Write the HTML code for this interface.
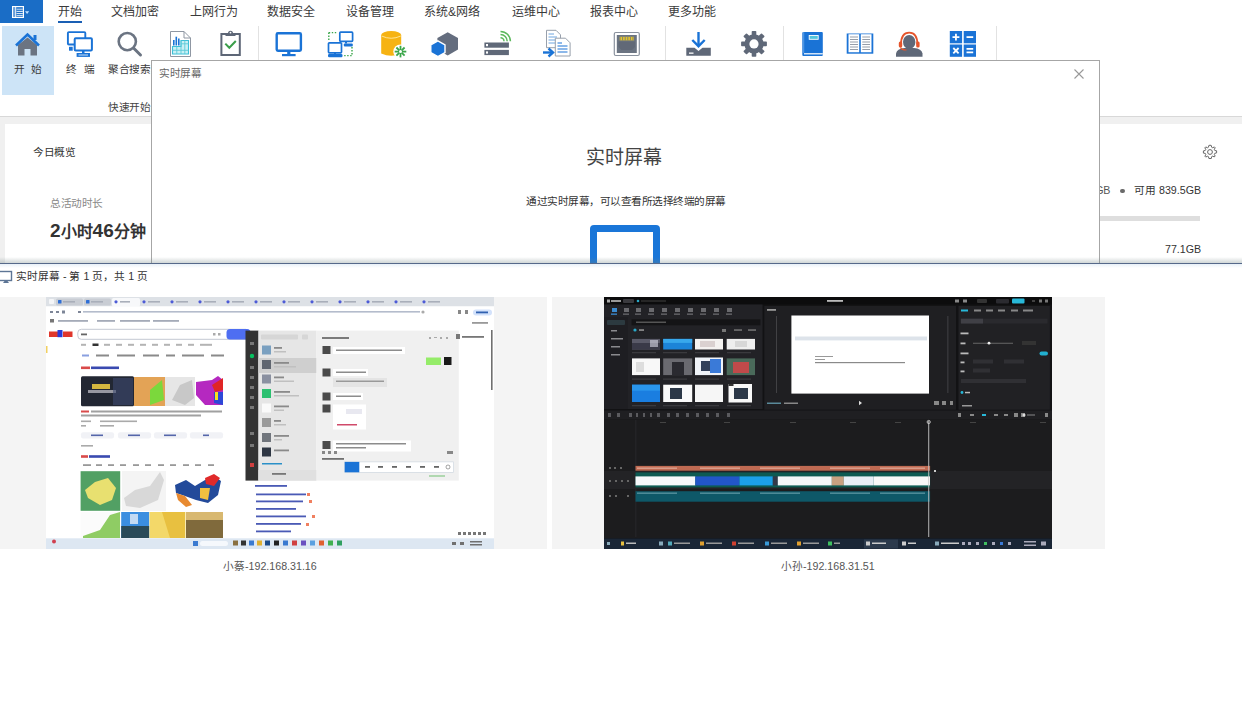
<!DOCTYPE html>
<html lang="zh-CN"><head><meta charset="utf-8">
<style>
html,body{margin:0;padding:0;}
body{width:1242px;height:716px;overflow:hidden;position:relative;background:#fff;font-family:"Liberation Sans",sans-serif;color:#333;}
.a{position:absolute;white-space:nowrap;}
.tab{position:absolute;top:2px;font-size:12px;line-height:20px;color:#3a3a3a;}
.lbl{position:absolute;top:60px;font-size:10.67px;letter-spacing:-0.5px;line-height:18px;color:#3a3a3a;}
</style></head><body>

<!-- menu bar -->
<div class="a" style="left:0;top:0;width:43px;height:23px;background:#1a6dc6;"></div>
<svg class="a" style="left:0;top:0" width="43" height="23">
  <rect x="12.6" y="6.6" width="10.8" height="10.8" fill="none" stroke="#fff" stroke-width="1.2"/>
  <line x1="15.7" y1="6.5" x2="15.7" y2="17.5" stroke="#fff" stroke-width="1"/>
  <rect x="13.3" y="7.3" width="1.6" height="9.4" fill="#c8dcf4" opacity="0.5"/>
  <line x1="16.5" y1="9.2" x2="22.8" y2="9.2" stroke="#e6f0fb" stroke-width="0.9"/>
  <line x1="16.5" y1="11.4" x2="22.8" y2="11.4" stroke="#fff" stroke-width="0.9"/>
  <line x1="16.5" y1="13.6" x2="22.8" y2="13.6" stroke="#fff" stroke-width="0.9"/>
  <line x1="16.5" y1="15.6" x2="22.8" y2="15.6" stroke="#e6f0fb" stroke-width="0.9"/>
  <path d="M25 11.2 L29.2 11.2 L27.1 13.9 Z" fill="#bfe0ff"/>
</svg>
<div class="tab" style="left:58px">开始</div>
<div class="a" style="left:58px;top:21px;width:24px;height:2px;background:#1a5fb4"></div>
<div class="tab" style="left:111px">文档加密</div>
<div class="tab" style="left:190px">上网行为</div>
<div class="tab" style="left:267px">数据安全</div>
<div class="tab" style="left:346px">设备管理</div>
<div class="tab" style="left:424px">系统&amp;网络</div>
<div class="tab" style="left:512px">运维中心</div>
<div class="tab" style="left:590px">报表中心</div>
<div class="tab" style="left:668px">更多功能</div>

<!-- ribbon -->
<div class="a" style="left:2px;top:26px;width:52px;height:69px;background:#cde4f7"></div>
<svg class="a" style="left:0;top:0" width="1242" height="120">
  <!-- home -->
  <path d="M18 45 L27.5 37.5 L37 45 V55.5 H30.5 V49 H24.5 V55.5 H18 Z" fill="#6b7482"/>
  <polyline points="16,45.5 27.5,34.5 39,45.5" fill="none" stroke="#1a73d6" stroke-width="2.6"/>
  <rect x="33.5" y="35" width="3" height="5" fill="#1a73d6"/>
  <!-- terminals -->
  <rect x="67.9" y="32.1" width="17.4" height="12.4" fill="none" stroke="#1a73d6" stroke-width="1.9" rx="1"/>
  <rect x="69" y="46.8" width="3.7" height="3.9" fill="#1a73d6"/>
  <rect x="74.7" y="38.3" width="17.2" height="12.1" fill="#fff" stroke="#1a73d6" stroke-width="2" rx="1"/>
  <rect x="82" y="50.5" width="2.5" height="2.5" fill="#1a73d6"/>
  <rect x="76.6" y="53" width="13.4" height="3.9" fill="#1a73d6"/>
  <line x1="78.5" y1="55" x2="88" y2="55" stroke="#fff" stroke-width="0.8"/>
  <!-- search -->
  <circle cx="127.3" cy="41.6" r="8.6" fill="none" stroke="#6b7482" stroke-width="2.6"/>
  <line x1="133.5" y1="48" x2="140.5" y2="55" stroke="#6b7482" stroke-width="3" stroke-linecap="round"/>
  <!-- report -->
  <path d="M170.5 31.5 H184 L190.5 38 V56.5 H170.5 Z" fill="#fff" stroke="#8f97a3" stroke-width="1"/>
  <path d="M184 31.5 V38 H190.5" fill="none" stroke="#8f97a3" stroke-width="1"/>
  <rect x="173" y="40" width="1.6" height="5.5" fill="#1a73d6"/>
  <rect x="175.5" y="36.7" width="1.6" height="8.8" fill="#1a73d6"/>
  <rect x="178" y="38.5" width="1.6" height="7" fill="#1a73d6"/>
  <path d="M181 40.5 H188.5 V54 H172.5 V46.5 H181 Z" fill="#c9f0f5" stroke="#3cbfd8" stroke-width="1.1"/>
  <path d="M172.5 50.3 H188.5 M181 43.8 H188.5 M176.8 46.5 V54 M181 40.5 V54 M184.8 40.5 V54" stroke="#5ccad8" stroke-width="0.9" fill="none"/>
  <!-- clipboard -->
  <rect x="221.4" y="34" width="18.4" height="21" fill="#fff" stroke="#5d6676" stroke-width="2"/>
  <path d="M225.5 36 H235.5 V33.2 H233 A2.5 2.5 0 0 0 228 33.2 H225.5 Z" fill="#5d6676"/>
  <circle cx="230.5" cy="32.6" r="0.9" fill="#fff"/>
  <polyline points="225.3,43.6 229.3,47.8 235.8,41" fill="none" stroke="#3a9e4a" stroke-width="2"/>
  <!-- separators -->
  <line x1="258.5" y1="26" x2="258.5" y2="112" stroke="#e2e2e2" stroke-width="1"/>
  <line x1="665.5" y1="26" x2="665.5" y2="112" stroke="#e2e2e2" stroke-width="1"/>
  <line x1="783.5" y1="26" x2="783.5" y2="112" stroke="#e2e2e2" stroke-width="1"/>
  <line x1="996.5" y1="26" x2="996.5" y2="112" stroke="#e2e2e2" stroke-width="1"/>
  <!-- monitor -->
  <rect x="276.7" y="33.2" width="24.2" height="17.6" rx="1.2" fill="#fff" stroke="#1a73d6" stroke-width="2.4"/>
  <rect x="287.2" y="51" width="3.2" height="3" fill="#1a73d6"/>
  <rect x="282" y="54" width="13.6" height="2.2" fill="#1a73d6"/>
  <!-- network -->
  <path d="M328.8 32.6 H337.5 M328.8 32.6 V41" stroke="#3aa64a" stroke-width="1.4" stroke-dasharray="1.4 1.6" fill="none"/>
  <path d="M352 47 V55.6 H343.5" stroke="#3aa64a" stroke-width="1.4" stroke-dasharray="1.4 1.6" fill="none"/>
  <rect x="339.8" y="32.1" width="12.8" height="9.2" rx="0.8" fill="#fff" stroke="#1a73d6" stroke-width="1.7"/>
  <rect x="345" y="41" width="2" height="2.5" fill="#1a73d6"/>
  <rect x="343.8" y="43.6" width="9" height="2.8" rx="1" fill="#1a73d6"/>
  <rect x="328.5" y="42.8" width="13" height="10" rx="0.8" fill="#fff" stroke="#1a73d6" stroke-width="1.7"/>
  <rect x="334" y="52.5" width="2" height="1.5" fill="#1a73d6"/>
  <rect x="328" y="54" width="14.5" height="3.2" rx="1.2" fill="#1a73d6"/>
  <!-- database -->
  <path d="M381.2 35 V53.5 Q391.2 58 401.2 53.5 V35 Z" fill="#f6b313"/>
  <ellipse cx="391.2" cy="35" rx="10" ry="4" fill="#f6b313"/>
  <path d="M381.6 36 Q391.2 40.5 400.8 36" fill="none" stroke="#ffe9a0" stroke-width="0.9"/>
  <circle cx="400.5" cy="51.6" r="7.2" fill="#fff"/>
  <g stroke="#3aa64a" stroke-width="1.8">
    <line x1="400.5" y1="45.8" x2="400.5" y2="57.4"/>
    <line x1="394.7" y1="51.6" x2="406.3" y2="51.6"/>
    <line x1="396.4" y1="47.5" x2="404.6" y2="55.7"/>
    <line x1="404.6" y1="47.5" x2="396.4" y2="55.7"/>
  </g>
  <circle cx="400.5" cy="51.6" r="1.5" fill="#fff"/>
  <!-- hexagons -->
  <polygon points="447.7,32.2 458,38 458,49.6 447.7,55.4 437.4,49.6 437.4,38" fill="#646d7e"/>
  <polygon points="437.9,40.8 445,44.8 445,52.5 437.9,56.5 430.8,52.5 430.8,44.8" fill="#1a73d6" stroke="#fff" stroke-width="1.4"/>
  <!-- server -->
  <rect x="484.4" y="42.5" width="24.5" height="5.2" fill="#5f6878"/>
  <rect x="484.4" y="49.9" width="24.5" height="5.2" fill="#5f6878"/>
  <rect x="486" y="44" width="2" height="2.2" fill="#fff"/>
  <rect x="486" y="51.4" width="2" height="2.2" fill="#fff"/>
  <g fill="none" stroke="#5cb85c" stroke-width="1.5">
    <path d="M500.5 37.8 A3.5 3.5 0 0 1 504 41.3"/>
    <path d="M500.5 34.6 A6.7 6.7 0 0 1 507.2 41.3"/>
    <path d="M500.5 31.4 A9.9 9.9 0 0 1 510.4 41.3"/>
  </g>
  <!-- doc transfer -->
  <path d="M546.5 30.3 H556 L560.5 34.8 V47.7 H546.5 Z" fill="#fff" stroke="#98a0ac" stroke-width="1"/>
  <path d="M548.5 34 H554 M548.5 37 H557 M548.5 40 H557 M548.5 43 H557" stroke="#6fa6e0" stroke-width="1"/>
  <path d="M555.3 38.2 H565.5 L570.1 42.8 V56 H555.3 Z" fill="#fff" stroke="#98a0ac" stroke-width="1"/>
  <path d="M557.5 43 H562 M557.5 46 H567.5 M557.5 49 H567.5 M557.5 52 H567.5" stroke="#1a73d6" stroke-width="1.2"/>
  <path d="M543 52.5 H552" stroke="#1a73d6" stroke-width="2.4"/>
  <polyline points="548.5,48.5 553,52.5 548.5,56.5" fill="none" stroke="#1a73d6" stroke-width="2.4"/>
  <!-- ethernet -->
  <rect x="614.3" y="32.5" width="25" height="23" rx="1.5" fill="#fff" stroke="#8a929e" stroke-width="1.2"/>
  <rect x="616.8" y="35" width="20" height="18" fill="#6b7482"/>
  <rect x="619.5" y="36.8" width="14.5" height="3.6" fill="#e6c62a"/>
  <path d="M620 37 V40.4 M622.6 37 V40.4 M625.2 37 V40.4 M627.8 37 V40.4 M630.4 37 V40.4 M633 37 V40.4" stroke="#6b7482" stroke-width="0.8"/>
  <path d="M618.5 41.5 H635 V47 L632 50 H621.5 L618.5 47 Z" fill="#5a6270" opacity="0.6"/>
  <!-- download -->
  <line x1="698.5" y1="32" x2="698.5" y2="45" stroke="#1a73d6" stroke-width="2.4"/>
  <polyline points="692.3,40 698.5,46.2 704.7,40" fill="none" stroke="#1a73d6" stroke-width="2.4"/>
  <path d="M686.3 47.7 H694.5 L698.5 51 L702.5 47.7 H710.8 V55.7 H686.3 Z" fill="#5f6878"/>
  <rect x="689" y="52.5" width="4.5" height="1.3" fill="#fff"/>
  <!-- gear -->
  <g transform="translate(754,43.9)" fill="#5f6878">
    <g>
      <rect x="-2.3" y="-12.9" width="4.6" height="5" rx="0.8"/>
      <rect x="-2.3" y="7.9" width="4.6" height="5" rx="0.8"/>
      <rect x="-12.9" y="-2.3" width="5" height="4.6" rx="0.8"/>
      <rect x="7.9" y="-2.3" width="5" height="4.6" rx="0.8"/>
    </g>
    <g transform="rotate(45)">
      <rect x="-2.3" y="-12.9" width="4.6" height="5" rx="0.8"/>
      <rect x="-2.3" y="7.9" width="4.6" height="5" rx="0.8"/>
      <rect x="-12.9" y="-2.3" width="5" height="4.6" rx="0.8"/>
      <rect x="7.9" y="-2.3" width="5" height="4.6" rx="0.8"/>
    </g>
    <circle r="9.6"/>
    <circle r="4.6" fill="#fff"/>
  </g>
  <!-- book -->
  <rect x="802.3" y="32" width="20.5" height="24" rx="1" fill="#1a73d6"/>
  <rect x="804" y="53.2" width="18.8" height="1.2" fill="#fff"/>
  <rect x="803.2" y="32" width="1" height="21" fill="#5aa0e8"/>
  <rect x="809.2" y="35.5" width="9" height="3.8" fill="#52c6dc" stroke="#fff" stroke-width="0.9"/>
  <!-- open book -->
  <path d="M846.7 33.5 H873.3 V53.7 H846.7 Z" fill="#1a73d6"/>
  <path d="M848.5 34.2 H859.2 V52.2 H848.5 Z M860.8 34.2 H871.5 V52.2 H860.8 Z" fill="#fff"/>
  <path d="M850 37 H858 M850 39.5 H858 M850 42 H858 M850 44.5 H858 M850 47 H858 M850 49.5 H858 M862.3 37 H870 M862.3 39.5 H870 M862.3 42 H870 M862.3 44.5 H870 M862.3 47 H870 M862.3 49.5 H870" stroke="#8a929e" stroke-width="0.9"/>
  <!-- headset -->
  <ellipse cx="909.2" cy="42" rx="6.2" ry="7" fill="#5f6878"/>
  <path d="M896 56.8 V53.5 Q897 48.5 904.5 48 H914 Q921.5 48.5 922.5 53.5 V56.8 Z" fill="#5f6878"/>
  <path d="M901 44.5 Q901 32.6 909.2 32.6 Q917.4 32.6 917.4 44.5" fill="none" stroke="#e5542b" stroke-width="1.8"/>
  <rect x="898.8" y="41.5" width="3.4" height="6" rx="1.5" fill="#e5542b"/>
  <rect x="916.2" y="41.5" width="3.4" height="6" rx="1.5" fill="#e5542b"/>
  <path d="M900.5 47.5 Q901.5 50 906.5 50" fill="none" stroke="#e5542b" stroke-width="1.2"/>
  <!-- calculator -->
  <rect x="949.8" y="31" width="12.3" height="12.3" fill="#1a73d6"/>
  <rect x="963.7" y="31" width="12.3" height="12.3" fill="#1a73d6"/>
  <rect x="949.8" y="44.5" width="12.3" height="12.3" fill="#1a73d6"/>
  <rect x="963.7" y="44.5" width="12.3" height="12.3" fill="#1a73d6"/>
  <g stroke="#fff" stroke-width="1.8">
    <path d="M952.5 37.1 H959.4 M955.95 33.7 V40.6"/>
    <path d="M966.5 37.1 H973.2"/>
    <path d="M953.3 48 L958.6 53.3 M958.6 48 L953.3 53.3"/>
    <path d="M966.5 48.8 H973.2 M966.5 52.4 H973.2"/>
  </g>
  <!-- ribbon bottom border -->
  <line x1="0" y1="116.5" x2="1242" y2="116.5" stroke="#d8d8d8" stroke-width="1"/>
</svg>
<div class="lbl" style="left:13.5px;letter-spacing:6.5px">开始</div>
<div class="lbl" style="left:66px;letter-spacing:6.5px">终端</div>
<div class="lbl" style="left:108px">聚合搜索</div>
<div class="a" style="left:108px;top:98px;font-size:10.67px;letter-spacing:-0.5px;line-height:18px;color:#444">快速开始</div>

<!-- main content area -->
<div class="a" style="left:0;top:117px;width:1242px;height:147px;background:#f0f0f0"></div>
<div class="a" style="left:5px;top:124px;width:1237px;height:140px;background:#fff"></div>
<div class="a" style="left:33px;top:143px;font-size:10.67px;letter-spacing:-0.5px;line-height:18px;color:#333">今日概览</div>
<div class="a" style="left:50px;top:194px;font-size:10.67px;letter-spacing:-0.5px;line-height:18px;color:#888">总活动时长</div>
<div class="a" style="left:50px;top:219px;font-size:16px;line-height:24px;color:#333;font-weight:bold"><span style="font-size:19px">2</span>小时<span style="font-size:19px">46</span>分钟</div>
<svg class="a" style="left:1202px;top:144px" width="16" height="16" viewBox="0 0 16 16">
  <path d="M8 1.2 L9.3 1.5 L9.6 3.2 L10.8 3.8 L12.3 2.9 L13.2 3.8 L12.3 5.3 L12.8 6.5 L14.6 6.8 L14.6 8.9 L12.8 9.3 L12.3 10.5 L13.2 12 L12.2 13 L10.8 12.1 L9.6 12.7 L9.3 14.5 L6.9 14.5 L6.5 12.7 L5.3 12.2 L3.8 13.1 L2.9 12.2 L3.8 10.7 L3.3 9.4 L1.4 9.1 L1.4 6.9 L3.2 6.5 L3.8 5.3 L2.8 3.9 L3.8 2.9 L5.3 3.8 L6.5 3.2 L6.8 1.5 Z" fill="none" stroke="#666" stroke-width="1"/>
  <circle cx="8" cy="8" r="2.4" fill="none" stroke="#666" stroke-width="1"/>
</svg>
<div class="a" style="right:132px;top:181px;font-size:10.67px;letter-spacing:-0.3px;line-height:18px;color:#555">5GB</div>
<div class="a" style="left:1120px;top:188.6px;width:4.8px;height:4.8px;border-radius:50%;background:#6a6a6a"></div>
<div class="a" style="left:1134px;top:181px;font-size:10.67px;line-height:18px;color:#333">可用 839.5GB</div>
<div class="a" style="left:1100px;top:216px;width:100px;height:5px;background:#dedede"></div>
<div class="a" style="left:1165px;top:240px;font-size:10.67px;line-height:18px;color:#333">77.1GB</div>

<!-- dialog -->
<div class="a" style="left:151px;top:60px;width:947px;height:210px;background:#fff;border:1px solid #a6a6a6;"></div>
<div class="a" style="left:159px;top:64px;font-size:10.67px;letter-spacing:-0.5px;line-height:18px;color:#666">实时屏幕</div>
<svg class="a" style="left:1073px;top:68px" width="12" height="12">
  <path d="M1.5 1.5 L10.5 10.5 M10.5 1.5 L1.5 10.5" stroke="#999" stroke-width="1.1"/>
</svg>
<div class="a" style="left:586px;top:144px;font-size:19px;line-height:28px;color:#444">实时屏幕</div>
<div class="a" style="left:526px;top:192px;font-size:10.67px;letter-spacing:-0.5px;line-height:18px;color:#333">通过实时屏幕，可以查看所选择终端的屏幕</div>
<div class="a" style="left:590px;top:225px;width:56px;height:60px;border:7px solid #1a76d8;border-radius:4px;background:#fff"></div>

<!-- bottom window -->
<div class="a" style="left:0;top:257px;width:1242px;height:6px;background:linear-gradient(rgba(110,130,130,0),rgba(110,130,130,0.32))"></div>
<div class="a" style="left:0;top:263px;width:1242px;height:453px;background:linear-gradient(#e9f1f8,#fff 4px);border-top:1.5px solid #56698a"></div>
<svg class="a" style="left:0;top:270px" width="14" height="14">
  <rect x="-1" y="1.5" width="12.5" height="9" fill="none" stroke="#5d7595" stroke-width="1.4"/>
  <path d="M3 13 H9 L7.5 11 H4.5 Z" fill="#5d7595"/>
</svg>
<div class="a" style="left:16px;top:267px;font-size:10.67px;line-height:18px;color:#333">实时屏幕 - 第 1 页，共 1 页</div>

<!-- cards -->
<div class="a" style="left:0;top:297px;width:547px;height:252px;background:#f4f4f4"></div>
<div class="a" style="left:552px;top:297px;width:553px;height:252px;background:#f4f4f4"></div>

<!-- screenshot 1 -->
<svg class="a" style="left:46px;top:297px;filter:blur(0.4px)" width="448" height="252" viewBox="46 297 448 252">
<rect x="46" y="297" width="448" height="252" fill="#fff"/>
<rect x="46" y="297" width="448" height="9.5" fill="#dde1e6"/>
<rect x="49" y="299" width="5" height="5" rx="1" fill="#f5f6f8"/>
<g fill="#c9cdd4">
<rect x="56" y="298.5" width="27" height="7" rx="1.5"/>
<rect x="84" y="298.5" width="27" height="7" rx="1.5"/>
</g>
<rect x="112" y="298" width="28" height="8.5" rx="1.5" fill="#f7f8fa"/>
<g fill="#2f6fd6">
<rect x="58" y="300" width="3.5" height="3.5" rx="0.6"/>
<rect x="86" y="300" width="3.5" height="3.5" rx="0.6"/>
</g>
<g fill="#4d5bd6">
<circle cx="116" cy="301.8" r="1.6"/><circle cx="144" cy="301.8" r="1.6"/><circle cx="172" cy="301.8" r="1.6"/><circle cx="200" cy="301.8" r="1.6"/><circle cx="228" cy="301.8" r="1.6"/><circle cx="256" cy="301.8" r="1.6"/><circle cx="284" cy="301.8" r="1.6"/><circle cx="312" cy="301.8" r="1.6"/><circle cx="340" cy="301.8" r="1.6"/><circle cx="368" cy="301.8" r="1.6"/><circle cx="396" cy="301.8" r="1.6"/><circle cx="424" cy="301.8" r="1.6"/>
</g>
<g fill="#a9afba">
<rect x="63" y="301" width="12" height="1.6"/><rect x="91" y="301" width="12" height="1.6"/><rect x="120" y="301" width="10" height="1.6"/><rect x="148" y="301" width="12" height="1.6"/><rect x="176" y="301" width="12" height="1.6"/><rect x="204" y="301" width="12" height="1.6"/><rect x="232" y="301" width="12" height="1.6"/><rect x="260" y="301" width="12" height="1.6"/><rect x="288" y="301" width="12" height="1.6"/><rect x="316" y="301" width="12" height="1.6"/><rect x="344" y="301" width="12" height="1.6"/><rect x="372" y="301" width="12" height="1.6"/><rect x="400" y="301" width="12" height="1.6"/><rect x="428" y="301" width="12" height="1.6"/>
</g>
<rect x="46" y="306.5" width="448" height="21" fill="#fff"/>
<g fill="#7d8597">
<rect x="50" y="311" width="3" height="2"/><rect x="56" y="311" width="3" height="2"/><rect x="62" y="310.5" width="3" height="3"/>
<rect x="78" y="311" width="3" height="2"/>
</g>
<rect x="83" y="311" width="337" height="1.6" fill="#b4bccc"/><circle cx="423" cy="312" r="1.6" fill="#aaa"/>
<rect x="458" y="310" width="3" height="4" fill="#888"/><rect x="465" y="310" width="3" height="4" fill="#888"/>
<rect x="473" y="309.5" width="19" height="6" rx="3" fill="#d3e2fb"/>
<rect x="476" y="311.5" width="12" height="1.8" fill="#3060b0"/>
<rect x="50" y="319" width="4" height="3.5" fill="#777"/>
<g fill="#a5abb8">
<rect x="58" y="320" width="30" height="1.8"/><rect x="97" y="320" width="18" height="1.8"/><rect x="120" y="320" width="30" height="1.8"/><rect x="153" y="320" width="26" height="1.8"/>
</g>
<rect x="472" y="322" width="16" height="1.8" fill="#999"/>
<!-- baidu logo -->
<rect x="49" y="331.5" width="9" height="5.5" fill="#e0362c"/>
<rect x="57.5" y="330" width="5" height="7.2" fill="#2a3ad8"/>
<rect x="63" y="331.5" width="9.5" height="5.5" fill="#e0362c"/>
<rect x="46" y="346" width="1.5" height="7" fill="#f2d060"/>
<!-- search -->
<rect x="77.8" y="329.3" width="171.5" height="10" rx="3.5" fill="#fff" stroke="#c4c8d2" stroke-width="1"/>
<rect x="81" y="333.5" width="6" height="1.8" fill="#666"/>
<rect x="218" y="333" width="2.5" height="2.5" fill="#aaa"/><rect x="213" y="333" width="2.5" height="2.5" fill="#aaa"/>
<rect x="226.5" y="329" width="24" height="10.5" rx="3.5" fill="#4e6ef2"/>
<!-- nav row -->
<g fill="#b4b4b4">
<rect x="81" y="343.8" width="5" height="2"/><rect x="92.5" y="343.5" width="6" height="2.5" fill="#333"/><rect x="104" y="343.8" width="6" height="2"/><rect x="116" y="343.8" width="6" height="2"/><rect x="128" y="343.8" width="6" height="2"/><rect x="140" y="343.8" width="6" height="2"/><rect x="152" y="343.8" width="6" height="2"/><rect x="164" y="343.8" width="6" height="2"/><rect x="176" y="343.8" width="6" height="2"/><rect x="188" y="343.8" width="6" height="2"/><rect x="200" y="343.8" width="12" height="2"/>
</g>
<g fill="#8a8a8a">
<rect x="82" y="354.5" width="7" height="2" fill="#8aa0e0"/><rect x="96" y="354.5" width="13" height="2"/><rect x="117" y="354.5" width="18" height="2"/><rect x="143" y="354.5" width="16" height="2"/><rect x="166" y="354.5" width="9" height="2"/><rect x="182" y="354.5" width="22" height="2"/><rect x="211" y="354.5" width="13" height="2"/>
</g>
<rect x="81" y="366.5" width="9" height="2.6" fill="#d94a4a"/><rect x="91" y="366.5" width="28" height="2.6" fill="#3a4ab0"/>
<!-- image strip -->
<rect x="81" y="376.2" width="53" height="30" rx="1.5" fill="#222733"/>
<rect x="92" y="384" width="18" height="5" fill="#e8c840" opacity="0.9"/>
<rect x="88" y="390" width="28" height="3" fill="#c9c9d0" opacity="0.7"/>
<rect x="113" y="378" width="20" height="27" fill="#3d4a70" opacity="0.6"/>
<rect x="134" y="377" width="31" height="29" fill="#e3a356"/>
<path d="M150 390 L162 380 L164 400 L150 405 Z" fill="#7bd83c"/>
<rect x="165" y="377" width="30" height="29" fill="#e6e6e6"/>
<path d="M172 400 L180 385 L192 380 L194 398 L185 405 Z" fill="#c8c8c8"/>
<path d="M196 382 L212 380 L218 376 L223 380 L223 405 L205 405 L196 395 Z" fill="#b528c0"/>
<path d="M212 385 L223 378 L223 390 L215 392 Z" fill="#e02525"/>
<path d="M214 392 L223 392 L223 405 L214 403 Z" fill="#2d48d8"/>
<rect x="215" y="392" width="3" height="8" fill="#f4e020"/>
<!-- text lines -->
<g fill="#a0a0a0">
<rect x="81" y="410.5" width="8" height="2" fill="#d94a4a"/><rect x="91" y="410.5" width="131" height="2"/>
<rect x="81" y="414.5" width="120" height="2"/>
<rect x="81" y="420.5" width="10" height="1.6" fill="#aaa"/><rect x="100" y="420.5" width="37" height="1.6" fill="#aaa"/>
<rect x="81" y="425" width="5" height="1.6" fill="#aaa"/><rect x="100" y="425" width="14" height="1.6" fill="#aaa"/>
</g>
<g fill="#f1f2f6">
<rect x="81" y="432.2" width="33" height="6.2" rx="2"/><rect x="118" y="432.2" width="33" height="6.2" rx="2"/><rect x="154" y="432.2" width="33" height="6.2" rx="2"/><rect x="190" y="432.2" width="33" height="6.2" rx="2"/>
</g>
<g fill="#5566aa">
<rect x="91" y="434.5" width="12" height="1.6"/><rect x="128" y="434.5" width="12" height="1.6"/><rect x="164" y="434.5" width="12" height="1.6"/><rect x="203" y="434.5" width="6" height="1.6"/>
</g>
<rect x="81" y="445" width="12" height="1.6" fill="#aaa"/>
<rect x="81" y="455.2" width="7" height="2.6" fill="#d94a4a"/><rect x="89" y="455.2" width="21" height="2.6" fill="#3a4ab0"/>
<g fill="#999">
<rect x="83" y="464.2" width="8" height="1.8"/><rect x="96" y="464.2" width="6" height="1.8"/><rect x="108" y="464.2" width="6" height="1.8"/><rect x="120" y="464.2" width="6" height="1.8"/><rect x="133" y="464.2" width="6" height="1.8"/><rect x="145" y="464.2" width="6" height="1.8"/><rect x="158" y="464.2" width="6" height="1.8"/><rect x="170" y="464.2" width="6" height="1.8"/><rect x="183" y="464.2" width="6" height="1.8"/><rect x="195" y="464.2" width="6" height="1.8"/><rect x="208" y="464.2" width="6" height="1.8"/>
</g>
<!-- images -->
<rect x="80.6" y="471.2" width="39.6" height="39.6" fill="#52a064"/>
<path d="M85 490 L95 482 L108 478 L116 488 L112 500 L100 505 L88 498 Z" fill="#e8e070"/>
<rect x="122" y="471" width="44" height="40" fill="#f4f4f4"/>
<path d="M124 498 L135 490 L150 486 L160 472 L164 480 L158 500 L140 508 L126 506 Z" fill="#d8d8d8"/>
<path d="M175 485 L186 480 L195 486 L205 480 L214 476 L221 481 L218 495 L208 503 L196 500 L185 496 L176 493 Z" fill="#234a9a"/>
<path d="M176 493 L185 496 L192 505 L186 507 L178 500 Z" fill="#e88a30"/>
<path d="M205 478 L214 474 L220 478 L214 486 L206 484 Z" fill="#e02a2a"/>
<path d="M200 488 L210 488 L208 500 L200 498 Z" fill="#f0c040"/>
<rect x="80.6" y="512" width="39.6" height="26" fill="#fbfbfb"/>
<path d="M83 536 L100 530 L110 515 L120 512 L120 538 L83 538 Z" fill="#8fcc64"/>
<rect x="121.2" y="512" width="28" height="26" fill="#3b8ee0"/>
<rect x="121.2" y="526" width="28" height="12" fill="#2a4a58"/>
<rect x="130" y="514" width="8" height="10" fill="#e6eef8" opacity=".8"/>
<rect x="149.5" y="512" width="36" height="26" fill="#f3d869"/>
<path d="M162 512 L185 512 L185 538 L170 538 Z" fill="#e8c040"/>
<rect x="186" y="512" width="37" height="26" fill="#806a3c"/>
<rect x="186" y="512" width="37" height="8" fill="#d8b870"/>
<!-- link list below wechat -->
<g fill="#4a5ab5">
<rect x="255" y="485" width="32" height="1.8"/>
<rect x="256" y="493.5" width="50" height="1.8"/>
<rect x="256" y="500.5" width="47" height="1.8"/>
<rect x="256" y="508" width="40" height="1.8"/>
<rect x="256" y="515.5" width="50" height="1.8"/>
<rect x="256" y="523" width="45" height="1.8"/>
<rect x="256" y="530.5" width="35" height="1.8"/>
</g>
<g fill="#f08060"><rect x="307" y="493" width="3" height="3"/><rect x="309" y="500" width="3" height="3"/><rect x="312" y="515" width="3" height="3"/><rect x="306" y="523" width="3" height="3"/></g>
<rect x="491" y="330" width="1.6" height="60" fill="#707070"/>


<g fill="#777"><rect x="458" y="532" width="3" height="3"/><rect x="463" y="532" width="3" height="3"/><rect x="468" y="532" width="3" height="3"/><rect x="473" y="532" width="3" height="3"/><rect x="478" y="532" width="3" height="3"/><rect x="483" y="532" width="3" height="3"/></g>
<!-- wechat -->
<rect x="245.5" y="330.6" width="13" height="150" fill="#333"/>
<circle cx="252" cy="356" r="2.2" fill="#07c160"/>
<g fill="#777"><rect x="250" y="342" width="4" height="3"/><rect x="250" y="366" width="4" height="3"/><rect x="250" y="376" width="4" height="3"/><rect x="250" y="386" width="4" height="3"/><rect x="250" y="396" width="4" height="3"/><rect x="250" y="406" width="4" height="3"/><rect x="250" y="432" width="4" height="3"/><rect x="250" y="444" width="4" height="3"/></g>
<rect x="250" y="463" width="4" height="4" fill="#d04040"/>
<rect x="258.5" y="330.6" width="58" height="150" fill="#e6e6e6"/>
<rect x="261" y="334.5" width="37" height="5" rx="1" fill="#d6d6d6"/>
<rect x="302" y="334.5" width="6" height="5" rx="1" fill="#d6d6d6"/>
<rect x="258.5" y="358" width="58" height="15" fill="#cfcfcf"/>
<g>
<rect x="262" y="345.5" width="9" height="9" fill="#7aa0c0"/>
<rect x="262" y="360" width="9" height="9" fill="#606670"/>
<rect x="262" y="374.5" width="9" height="9" fill="#8a90a0"/>
<rect x="262" y="389" width="9" height="9" fill="#2cc070"/>
<rect x="262" y="403.5" width="9" height="9" fill="#fafafa"/>
<rect x="262" y="418" width="9" height="9" fill="#9a9a9a"/>
<rect x="262" y="433" width="9" height="9" fill="#70757c"/>
<rect x="262" y="447.5" width="9" height="9" fill="#2e3643"/>
</g>
<g fill="#8a8a8a"><rect x="274" y="347" width="8" height="1.8"/><rect x="274" y="362" width="15" height="1.8"/><rect x="274" y="376.5" width="10" height="1.8"/><rect x="274" y="391" width="16" height="1.8"/><rect x="274" y="405.5" width="15" height="1.8"/><rect x="274" y="420" width="7" height="1.8"/><rect x="274" y="435" width="15" height="1.8"/><rect x="274" y="449.5" width="15" height="1.8"/></g>
<g fill="#c0c0c0"><rect x="274" y="351" width="12" height="1.5"/><rect x="274" y="366" width="22" height="1.5"/><rect x="274" y="380.5" width="20" height="1.5"/><rect x="274" y="395" width="25" height="1.5"/><rect x="274" y="409.5" width="10" height="1.5"/><rect x="274" y="424" width="12" height="1.5"/><rect x="274" y="439" width="8" height="1.5"/></g>
<rect x="262" y="463" width="20" height="1.5" fill="#2a90c8"/>
<rect x="258.5" y="470" width="58" height="10.6" fill="#e0e0e0"/>
<rect x="272" y="473" width="14" height="1.8" fill="#777"/>
<rect x="316.5" y="330.6" width="142.3" height="150" fill="#f0f0f0"/>
<rect x="322" y="337" width="27" height="2" fill="#7a7a7a"/>
<g fill="#aaa"><rect x="429" y="337" width="2" height="2"/><rect x="434" y="337" width="3" height="1"/><rect x="440" y="337" width="2" height="2"/><rect x="446" y="337" width="2" height="2"/></g>
<rect x="456" y="334" width="4" height="5" fill="#444" opacity=".7"/>
<rect x="462" y="336" width="22" height="1.8" fill="#777"/>
<g fill="#4a4a4a"><rect x="322.5" y="346" width="8" height="8"/><rect x="322.5" y="368.5" width="8" height="8"/><rect x="322.5" y="392.5" width="8" height="8"/><rect x="322.5" y="404.5" width="8" height="8"/><rect x="322.5" y="441" width="8" height="8"/></g>
<g fill="#fff"><rect x="333" y="347" width="72" height="7"/><rect x="333" y="369" width="35" height="7"/><rect x="333" y="393" width="30" height="7"/><rect x="333" y="404.5" width="33" height="25"/><rect x="333" y="440.5" width="78" height="11"/></g>
<g fill="#8c8c8c"><rect x="336" y="349.5" width="66" height="1.5"/><rect x="336" y="371.5" width="30" height="1.5"/><rect x="336" y="395.5" width="25" height="1.5"/><rect x="336" y="443" width="70" height="1.5"/><rect x="336" y="447" width="30" height="1.5"/></g>
<rect x="333" y="378" width="54" height="9" fill="#e4e4e4"/><rect x="336" y="380.5" width="48" height="1.5" fill="#999"/>
<rect x="346" y="409" width="16" height="5" fill="#e8e8f0"/><rect x="337" y="424" width="20" height="1.5" fill="#d04a6a"/>
<rect x="426" y="357.5" width="15" height="7.5" fill="#95ec69"/>
<rect x="444" y="357" width="7.5" height="8" fill="#1a1a1a"/>
<g fill="#888"><rect x="322" y="451" width="3" height="3"/><rect x="328" y="451" width="3" height="3"/><rect x="334" y="451" width="3" height="3"/><rect x="447" y="451" width="6" height="3"/></g>
<rect x="322" y="458" width="22" height="1.8" fill="#707070"/>
<rect x="344.7" y="461.9" width="108.8" height="10.4" fill="#fff" stroke="#c8d2dc" stroke-width="0.6"/>
<rect x="344.7" y="461.9" width="14.6" height="10.4" fill="#1a73d6"/>
<g fill="#666"><rect x="365" y="466" width="5" height="1.8"/><rect x="378" y="466" width="5" height="1.8"/><rect x="392" y="466" width="5" height="1.8"/><rect x="406" y="466" width="5" height="1.8"/><rect x="420" y="466" width="5" height="1.8"/><rect x="434" y="466" width="5" height="1.8"/><circle cx="448" cy="467" r="2" fill="none" stroke="#666" stroke-width="0.6"/></g>
<rect x="429" y="475" width="16" height="2" fill="#b0d8b0"/>
<!-- taskbar -->
<rect x="46" y="538.3" width="448" height="10.7" fill="#dde7f2"/>
<circle cx="54" cy="541.5" r="2" fill="#d04050"/>
<g fill="#3a7ad0">
<rect x="193" y="541" width="5" height="5"/>
<rect x="233" y="540.5" width="5" height="5" fill="#8a7040"/><rect x="241" y="540.5" width="5" height="5" fill="#333"/><rect x="249" y="540.5" width="5" height="5"/><rect x="257" y="540.5" width="5" height="5" fill="#e0b030"/><rect x="265" y="540.5" width="5" height="5" fill="#1a4a8a"/><rect x="274" y="540.5" width="5" height="5" fill="#222"/><rect x="283" y="540.5" width="5" height="5"/><rect x="292" y="540.5" width="5" height="5" fill="#d04040"/><rect x="301" y="540.5" width="5" height="5" fill="#6a50c0"/><rect x="310" y="540.5" width="5" height="5" fill="#5aa0e0"/><rect x="319" y="540.5" width="5" height="5" fill="#e06030"/><rect x="328" y="540.5" width="5" height="5" fill="#40b050"/><rect x="337" y="540.5" width="5" height="5" fill="#30a060"/>
</g>
<rect x="200" y="541" width="28" height="5" rx="2.5" fill="#f5f8fc"/>
<g fill="#707070"><rect x="452" y="542" width="4" height="3"/><rect x="460" y="542" width="4" height="3"/><rect x="470" y="541" width="12" height="1.5"/><rect x="470" y="544" width="12" height="1.5"/></g>
</svg>

<!-- screenshot 2 -->
<svg class="a" style="left:604px;top:297px;filter:blur(0.4px)" width="448" height="252" viewBox="604 297 448 252">
<rect x="604" y="297" width="448" height="252" fill="#121214"/>
<!-- top bar -->
<rect x="604" y="297" width="448" height="7.5" fill="#0c0c0d"/>
<rect x="607" y="299.5" width="3" height="3" fill="#aaa"/><rect x="611" y="300" width="10" height="2" fill="#999"/>
<rect x="623" y="299" width="11" height="4" rx="1" fill="#3a3a3e"/>
<circle cx="638" cy="301" r="1.3" fill="#28a8c8"/>
<rect x="641" y="300.3" width="25" height="1.4" fill="#333"/>
<rect x="827" y="300" width="16" height="1.8" fill="#bbb"/>
<rect x="955" y="299.5" width="4" height="3" fill="#888"/><rect x="963" y="299.5" width="4" height="3" fill="#888"/>
<rect x="977" y="299" width="10" height="4" rx="1" fill="#333"/>
<rect x="996" y="299" width="13" height="4.5" rx="1" fill="#2b2b30"/>
<rect x="1012" y="298.5" width="12.5" height="5" rx="1" fill="#28b8d8"/>
<g fill="#777"><rect x="1032" y="300.5" width="3" height="1"/><rect x="1039" y="299.5" width="3" height="3"/><rect x="1045" y="299.5" width="3" height="3"/></g>
<!-- media panel -->
<rect x="604" y="304.5" width="158.5" height="104.5" fill="#222226"/>
<g fill="#6a6a6e">
<rect x="612" y="308" width="5" height="4" fill="#3a8ad0"/><rect x="624" y="308" width="5" height="4"/><rect x="636" y="308" width="5" height="4"/><rect x="649" y="308" width="5" height="4"/><rect x="662" y="308" width="5" height="4"/><rect x="675" y="308" width="5" height="4"/><rect x="688" y="308" width="5" height="4"/><rect x="701" y="308" width="5" height="4"/><rect x="714" y="308" width="5" height="4"/><rect x="727" y="308" width="5" height="4"/>
<rect x="611" y="313.5" width="6" height="1.3" fill="#3a8ad0"/><rect x="623" y="313.5" width="6" height="1.3"/><rect x="635" y="313.5" width="6" height="1.3"/><rect x="648" y="313.5" width="6" height="1.3"/><rect x="661" y="313.5" width="6" height="1.3"/><rect x="674" y="313.5" width="6" height="1.3"/><rect x="687" y="313.5" width="6" height="1.3"/><rect x="700" y="313.5" width="6" height="1.3"/><rect x="713" y="313.5" width="6" height="1.3"/><rect x="726" y="313.5" width="6" height="1.3"/>
</g>
<rect x="604" y="317" width="24" height="92" fill="#1e1e22"/>
<rect x="607" y="320" width="18" height="5" rx="1" fill="#2c3a40"/>
<g fill="#8a8a8e"><rect x="611" y="330" width="6" height="1.5"/><rect x="611" y="338" width="12" height="1.5"/><rect x="611" y="346" width="9" height="1.5"/><rect x="611" y="354" width="9" height="1.5"/></g>
<rect x="631.5" y="319.3" width="129" height="6" fill="#141416"/>
<rect x="636" y="321.5" width="30" height="1.5" fill="#555"/>
<circle cx="635" cy="330" r="1.6" fill="#28a8c8"/><rect x="639" y="329.3" width="5" height="1.5" fill="#999"/>
<g fill="#777"><rect x="722" y="329" width="4" height="3"/><rect x="734" y="329.3" width="8" height="1.5"/><rect x="748" y="329.3" width="8" height="1.5"/></g>
<!-- row1 -->
<rect x="632" y="338.9" width="28" height="10.6" fill="#5a5a68"/>
<rect x="632" y="343" width="28" height="6.5" fill="#3a3a48"/>
<rect x="650" y="340" width="8" height="7" fill="#d8d8e8" opacity=".6"/>
<rect x="663.2" y="338.9" width="29" height="10.6" fill="#1c84d8"/>
<rect x="663.2" y="338.9" width="29" height="4" fill="#38a8ec"/>
<rect x="695" y="338.9" width="28" height="10.6" fill="#f4f2f0"/>
<rect x="700" y="341" width="15" height="6" fill="#c0b0b0" opacity=".5"/>
<rect x="726.7" y="338.9" width="28.3" height="10.6" fill="#eeeeee"/>
<rect x="735" y="341" width="12" height="6" fill="#c8c8c8" opacity=".6"/>
<g fill="#3a3a3e"><rect x="632" y="352" width="24" height="1.3"/><rect x="663" y="352" width="24" height="1.3"/><rect x="695" y="352" width="24" height="1.3"/><rect x="727" y="352" width="24" height="1.3"/></g>
<!-- row2 -->
<rect x="632" y="358.4" width="28" height="16.7" fill="#f8f8f8"/>
<rect x="636" y="362" width="8" height="10" fill="#ddd"/>
<rect x="663.2" y="358.4" width="29" height="16.7" fill="#6a6a70"/>
<rect x="672" y="362" width="12" height="13" fill="#2a2a30"/>
<rect x="695" y="357.5" width="28" height="17.6" fill="#f0f3f8"/>
<rect x="701" y="361" width="12" height="10" fill="#33405a"/>
<rect x="710" y="359" width="11" height="14" fill="#3a7ad8"/>
<rect x="726.7" y="358.4" width="28.3" height="16.7" fill="#4a6a5a"/>
<rect x="733" y="362" width="16" height="11" fill="#c04a4a"/>
<g fill="#3a3a3e"><rect x="632" y="378.5" width="24" height="1.3"/><rect x="663" y="378.5" width="24" height="1.3"/><rect x="695" y="378.5" width="24" height="1.3"/><rect x="727" y="378.5" width="24" height="1.3"/></g>
<!-- row3 -->
<rect x="632" y="384.7" width="28" height="17.3" fill="#1a7ee0"/>
<rect x="632" y="384.7" width="28" height="6" fill="#2a96ec"/>
<rect x="663.2" y="384.7" width="29" height="17.3" fill="#fafafa"/>
<rect x="670" y="388" width="12" height="11" fill="#2c3848"/>
<rect x="695" y="384.7" width="28" height="17.3" fill="#f6f6f6"/>
<rect x="728.5" y="384" width="23.5" height="18.5" fill="#f8f8f8"/>
<rect x="734" y="388" width="14" height="11" fill="#2c3848"/>
<rect x="728.5" y="384" width="5" height="2" fill="#333"/>
<g fill="#3a3a3e"><rect x="632" y="405" width="24" height="1.3"/><rect x="663" y="405" width="24" height="1.3"/><rect x="695" y="405" width="24" height="1.3"/><rect x="727" y="405" width="24" height="1.3"/></g>
<!-- preview panel -->
<rect x="764.3" y="305.9" width="191.7" height="103.8" fill="#1f1f22"/>
<rect x="767" y="309" width="9" height="1.8" fill="#999"/>
<rect x="776" y="316" width="0.8" height="77" fill="#4a4a4e"/>
<rect x="947.5" y="316" width="0.8" height="77" fill="#4a4a4e"/>
<rect x="791.4" y="315.5" width="137.6" height="78.1" fill="#fff"/>
<rect x="795" y="336.5" width="132" height="3.9" fill="#dde3ea"/>
<rect x="815" y="356" width="18" height="1" fill="#999"/>
<rect x="815" y="359" width="10" height="1" fill="#999"/>
<rect x="815" y="362" width="90" height="1.2" fill="#8a8a8a"/>
<g fill="#5a8a9a"><rect x="767" y="402.5" width="14" height="1.5"/></g>
<rect x="784" y="402.5" width="14" height="1.5" fill="#888"/>
<path d="M859 400.8 L862 403 L859 405.2 Z" fill="#ddd"/>
<g fill="#888"><rect x="934" y="401" width="5" height="4"/><rect x="942" y="401" width="4" height="4"/><rect x="950" y="401" width="3" height="4"/></g>
<!-- props panel -->
<rect x="958.5" y="305.9" width="91.4" height="103.8" fill="#212124"/>
<rect x="961" y="309.5" width="7" height="2" fill="#28b8d8"/>
<g fill="#888"><rect x="974" y="309.5" width="7" height="2"/><rect x="986" y="309.5" width="7" height="2"/><rect x="998" y="309.5" width="7" height="2"/><rect x="1011" y="309.5" width="7" height="2"/><rect x="1023" y="309.5" width="10" height="2"/></g>
<rect x="960.5" y="318.7" width="87" height="4.8" fill="#2a2a2e"/>
<rect x="961" y="318.7" width="22" height="4.8" fill="#404046"/>
<g fill="#bbb"><rect x="960.5" y="332.5" width="8" height="1.8"/><rect x="960.5" y="342.5" width="5" height="1.8"/><rect x="960.5" y="352.5" width="8" height="1.8"/><rect x="960.5" y="361.5" width="4" height="1.8"/><rect x="960.5" y="370.5" width="4" height="1.8"/></g>
<rect x="973" y="342.8" width="40" height="0.8" fill="#777"/><circle cx="989" cy="343.2" r="1.4" fill="#eee"/>
<rect x="1022" y="341" width="14" height="4" fill="#333"/>
<rect x="1039.5" y="351.5" width="8.5" height="4" rx="2" fill="#22b0d0"/>
<g fill="#303034"><rect x="973" y="359.5" width="20" height="4"/><rect x="1004" y="359.5" width="20" height="4"/><rect x="973" y="368.5" width="17" height="4"/><rect x="961" y="379" width="65" height="4"/></g>
<circle cx="962" cy="392.5" r="1.4" fill="#28b8d8"/><rect x="965" y="391.8" width="5" height="1.5" fill="#bbb"/>
<rect x="962" y="405" width="10" height="1.5" fill="#999"/>
<!-- timeline -->
<rect x="604" y="410.5" width="448" height="9" fill="#1f1f22"/>
<g fill="#5a5a5e"><rect x="608" y="413" width="3" height="4"/><rect x="617" y="413" width="3" height="4"/><rect x="629" y="413" width="3" height="4"/><rect x="636" y="413" width="2" height="4"/><rect x="643" y="413" width="2" height="4"/><rect x="650" y="413" width="2" height="4"/><rect x="657" y="413" width="3" height="4"/><rect x="667" y="413" width="3" height="4"/><rect x="676" y="413" width="3" height="4"/><rect x="686" y="413" width="3" height="4"/><rect x="696" y="413" width="3" height="4"/><rect x="706" y="413" width="3" height="4"/><rect x="716" y="413" width="3" height="4"/><rect x="727" y="413" width="3" height="4"/></g>
<g fill="#888"><rect x="958" y="413" width="3" height="4"/><rect x="970" y="414" width="4" height="2"/><rect x="982" y="414" width="4" height="2" fill="#28b8d8"/><rect x="994" y="414" width="4" height="2"/><rect x="1004" y="414" width="4" height="2"/><rect x="1014" y="413" width="4" height="4"/><rect x="1021" y="413" width="4" height="4"/><rect x="1027" y="414.5" width="8" height="1"/><circle cx="1024" cy="415" r="1.5" fill="#ddd"/><rect x="1045" y="413" width="3" height="4"/></g>
<rect x="604" y="419.5" width="448" height="118.5" fill="#1c1c1e"/>
<rect x="635.5" y="420" width="0.8" height="117" fill="#2a2a2e"/>
<g fill="#444"><rect x="660" y="422" width="6" height="1"/><rect x="724" y="422" width="6" height="1"/><rect x="790" y="422" width="6" height="1"/><rect x="850" y="422" width="6" height="1"/><rect x="895" y="422" width="6" height="1"/><rect x="970" y="422" width="6" height="1"/><rect x="1040" y="422" width="6" height="1"/></g>
<rect x="604" y="471" width="448" height="18" fill="#232326"/>
<g fill="#666"><rect x="609" y="467" width="2" height="2"/><rect x="614" y="467" width="2" height="2"/><rect x="620" y="467" width="2" height="2"/><rect x="609" y="480" width="2" height="2"/><rect x="615" y="480" width="2" height="2"/><rect x="621" y="480" width="2" height="2"/><rect x="627" y="480" width="2" height="2"/><rect x="609" y="495" width="2" height="2"/><rect x="615" y="495" width="2" height="2"/><rect x="627" y="495" width="2" height="2"/></g>
<rect x="635.5" y="465.9" width="294.6" height="4.8" fill="#bf6a52"/>
<g fill="#e8b8a8" opacity=".7"><rect x="637" y="467.5" width="40" height="1.4"/><rect x="700" y="467.5" width="40" height="1.4"/><rect x="760" y="467.5" width="40" height="1.4"/><rect x="830" y="467.5" width="40" height="1.4"/><rect x="880" y="467.5" width="45" height="1.4"/></g>
<rect x="635.5" y="472.4" width="294.6" height="15" fill="#0d5a52"/>
<rect x="635.5" y="476.4" width="59.8" height="9" fill="#f6f8fa"/>
<rect x="695.3" y="476.4" width="44.2" height="9" fill="#2256c8"/>
<rect x="739.5" y="476.4" width="33.3" height="9" fill="#1ca0e8"/>
<rect x="772.8" y="476.4" width="5" height="9" fill="#333848"/>
<rect x="777.8" y="476.4" width="54" height="9" fill="#f4f6f8"/>
<rect x="831.8" y="476.4" width="12" height="9" fill="#c8a080"/>
<rect x="843.8" y="476.4" width="30" height="9" fill="#e8eef6"/>
<rect x="874" y="476.4" width="56" height="9" fill="#f8f8f8"/>
<rect x="635.5" y="491.2" width="294.6" height="10.5" fill="#0e5868"/>
<g fill="#9ac8d0" opacity=".5"><rect x="637" y="492.5" width="40" height="1.4"/><rect x="700" y="492.5" width="40" height="1.4"/><rect x="760" y="492.5" width="40" height="1.4"/><rect x="830" y="492.5" width="40" height="1.4"/><rect x="880" y="492.5" width="45" height="1.4"/></g>
<rect x="928.3" y="421" width="0.9" height="116" fill="#c8c8c8"/>
<circle cx="928.7" cy="422" r="1.6" fill="none" stroke="#ddd" stroke-width="0.8"/>
<rect x="934" y="470" width="2" height="2" fill="#ccc"/>
<!-- taskbar -->
<rect x="604" y="538.5" width="448" height="10.5" fill="#1a2636"/>
<g fill="#8ab"><rect x="607" y="542" width="3" height="3"/><rect x="621" y="541.5" width="3" height="4" fill="#e8c040"/><rect x="626" y="542.5" width="10" height="1.5" fill="#bbb"/><rect x="659" y="541.5" width="4" height="4"/><rect x="668" y="541.5" width="4" height="4" fill="#5ab"/><rect x="674" y="542.5" width="16" height="1.5" fill="#999"/><rect x="700" y="541.5" width="4" height="4" fill="#e0a030"/><rect x="706" y="542.5" width="16" height="1.5" fill="#999"/><rect x="732" y="541.5" width="4" height="4" fill="#d04030"/><rect x="738" y="542.5" width="16" height="1.5" fill="#999"/><rect x="765" y="541.5" width="4" height="4" fill="#3a9ad8"/><rect x="771" y="542.5" width="16" height="1.5" fill="#999"/><rect x="797" y="541.5" width="4" height="4" fill="#e0a030"/><rect x="803" y="542.5" width="16" height="1.5" fill="#999"/><rect x="828" y="541.5" width="4" height="4" fill="#40c060"/><rect x="834" y="542.5" width="6" height="1.5" fill="#999"/></g>
<rect x="864" y="539.5" width="34" height="9" fill="#2c3a4c"/>
<g fill="#ccc"><rect x="866" y="541.5" width="4" height="4"/><rect x="872" y="542.5" width="14" height="1.5"/><rect x="902" y="541.5" width="4" height="4"/><rect x="908" y="542.5" width="8" height="1.5"/><rect x="935" y="541.5" width="4" height="4" fill="#8ab"/><rect x="941" y="542.5" width="18" height="1.5"/></g>
<g fill="#aab"><rect x="962" y="542" width="3" height="3"/><rect x="968" y="542" width="3" height="3"/><rect x="976" y="542" width="3" height="3"/><rect x="984" y="542" width="3" height="3" fill="#40c060"/><rect x="992" y="542" width="3" height="3"/><rect x="1000" y="542" width="3" height="3" fill="#3a7ad8"/><rect x="1008" y="542" width="3" height="3"/><rect x="1024" y="541" width="12" height="1.5"/><rect x="1024" y="544.5" width="12" height="1.5"/><rect x="1041" y="541.5" width="5" height="4"/></g>
</svg>

<div class="a" style="left:223px;top:557px;font-size:10.67px;line-height:18px;color:#555">小蔡-192.168.31.16</div>
<div class="a" style="left:781px;top:557px;font-size:10.67px;line-height:18px;color:#555">小孙-192.168.31.51</div>

</body></html>
